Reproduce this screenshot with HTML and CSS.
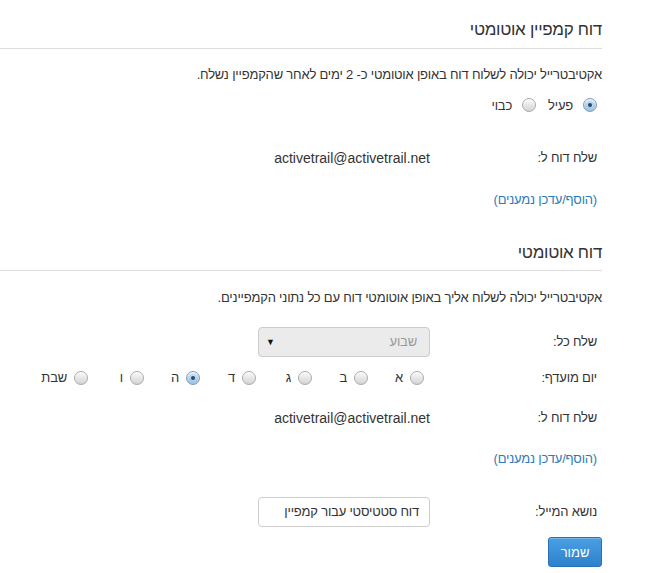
FILE: index.html
```html
<!DOCTYPE html>
<html lang="he" dir="rtl">
<head>
<meta charset="utf-8">
<link rel="stylesheet" href="styles.css">
</head>
<body>
<div class="page">
  <section class="block">
    <h2 class="title t1">דוח קמפיין אוטומטי</h2>
    <p class="desc d1">אקטיבטרייל יכולה לשלוח דוח באופן אוטומטי כ- 2 ימים לאחר שהקמפיין נשלח.</p>
    <div class="form">
      <div class="onoff">
        <label class="opt"><span class="radio checked"></span><span>פעיל</span></label>
        <label class="opt"><span class="radio"></span><span>כבוי</span></label>
      </div>
      <div class="row r-send1">
        <div class="lbl">שלח דוח ל:</div>
        <div class="val email">activetrail@activetrail.net</div>
      </div>
      <a class="link l1" href="#">(הוסף/עדכן נמענים)</a>
    </div>
  </section>

  <section class="block">
    <h2 class="title t2">דוח אוטומטי</h2>
    <p class="desc d2">אקטיבטרייל יכולה לשלוח אליך באופן אוטומטי דוח עם כל נתוני הקמפיינים.</p>
    <div class="form">
      <div class="row r-every">
        <div class="lbl">שלח כל:</div>
        <div class="val">
          <div class="select"><span class="sel-text">שבוע</span><span class="arrow">▼</span></div>
        </div>
      </div>
      <div class="row r-day">
        <div class="lbl">יום מועדף:</div>
        <div class="val days">
          <label class="day"><span class="radio"></span><span>א</span></label>
          <label class="day"><span class="radio"></span><span>ב</span></label>
          <label class="day"><span class="radio"></span><span>ג</span></label>
          <label class="day"><span class="radio"></span><span>ד</span></label>
          <label class="day"><span class="radio checked"></span><span>ה</span></label>
          <label class="day"><span class="radio"></span><span>ו</span></label>
          <label class="day last"><span class="radio"></span><span>שבת</span></label>
        </div>
      </div>
      <div class="row r-send2">
        <div class="lbl">שלח דוח ל:</div>
        <div class="val email">activetrail@activetrail.net</div>
      </div>
      <a class="link l2" href="#">(הוסף/עדכן נמענים)</a>
      <div class="row r-subject">
        <div class="lbl">נושא המייל:</div>
        <div class="val">
          <div class="input">דוח סטטיסטי עבור קמפיין</div>
        </div>
      </div>
      <div class="actions">
        <button class="btn" type="button">שמור</button>
      </div>
    </div>
  </section>
</div>
</body>
</html>
```

FILE: styles.css
```css
* { box-sizing: border-box; }
html, body { margin: 0; padding: 0; background: #fff; }
body {
  font-family: "Liberation Sans", Arial, "DejaVu Sans", sans-serif;
  font-size: 13px;
  letter-spacing: -0.2px;
  color: #333;
  direction: rtl;
}
.page {
  padding-right: 56px;
  height: 573px;
  overflow: hidden;
}
.block { margin: 0; }
.title {
  margin: 0;
  font-size: 17px;
  letter-spacing: -0.3px;
  font-weight: normal;
  line-height: 24px;
  color: #333;
  border-bottom: 1px solid #ddd;
}
.t1 { margin-top: 18px; padding-bottom: 6px; }
.t2 { margin-top: 31px; padding-bottom: 5px; }
.desc {
  margin: 0;
  line-height: 18px;
}
.d1 { margin-top: 17px; }
.d2 { margin-top: 18px; }
.form { padding-right: 5px; }
.onoff {
  display: flex;
  height: 20px;
  align-items: center;
  margin-top: 11px;
  gap: 12px;
}
.opt {
  display: flex;
  align-items: center;
  gap: 10px;
}
.radio {
  display: inline-block;
  width: 14px;
  height: 14px;
  border-radius: 50%;
  border: 1px solid #a9a9a9;
  background: linear-gradient(#fafafa, #d4d4d4);
  box-shadow: inset 0 1px 1px #fff;
  position: relative;
  flex: none;
}
.radio.checked {
  border-color: #7d9cbb;
  background: linear-gradient(#cfe2f2, #9dc2e2);
}
.radio.checked::after {
  content: "";
  position: absolute;
  width: 4px;
  height: 4px;
  border-radius: 50%;
  background: #264a6e;
  top: 4px;
  left: 4px;
}
.row {
  display: flex;
  align-items: center;
}
.lbl {
  width: 167px;
  flex: none;
  line-height: 20px;
}
.val { line-height: 20px; }
.email { font-size: 14px; letter-spacing: 0; }
.r-send1 { height: 20px; margin-top: 33px; }
.link {
  display: block;
  color: #2c7cb8;
  text-decoration: none;
  line-height: 20px;
  width: max-content;
}
.l1 { margin-top: 22px; }
.l2 { margin-top: 21px; }
.r-every { height: 30px; margin-top: 20px; }
.select {
  width: 172px;
  height: 30px;
  border: 1px solid #ccc;
  border-radius: 4px;
  background: #ebebeb;
  display: flex;
  align-items: center;
  justify-content: space-between;
  padding: 0 12px 0 7px;
  font-size: 13px;
}
.sel-text { color: #999; }
.arrow { font-size: 9px; color: #111; }
.r-day { height: 20px; margin-top: 11px; }
.days {
  display: flex;
  align-items: center;
  font-size: 13px;
  margin-right: 6px;
}
.day {
  display: flex;
  align-items: center;
  gap: 7px;
  width: 56px;
  flex: none;
}
.day.last { width: auto; }
.r-send2 { height: 20px; margin-top: 20px; }
.r-subject { height: 30px; margin-top: 28px; }
.input {
  width: 172px;
  height: 30px;
  border: 1px solid #ccc;
  border-radius: 4px;
  background: #fff;
  padding: 0 10px;
  display: flex;
  align-items: center;
  font-size: 13px;
  color: #333;
}
.actions {
  margin-top: 10px;
  margin-right: -5px;
}
.btn {
  width: 54px;
  height: 30px;
  border: 1px solid #2a70b3;
  border-radius: 3px;
  background: linear-gradient(#4aa0e4, #2c81cc);
  color: #fff;
  font-family: "Liberation Sans", Arial, sans-serif;
  font-size: 13px;
  padding: 0;
  box-shadow: inset 0 1px 0 rgba(255,255,255,0.25);
}
```
